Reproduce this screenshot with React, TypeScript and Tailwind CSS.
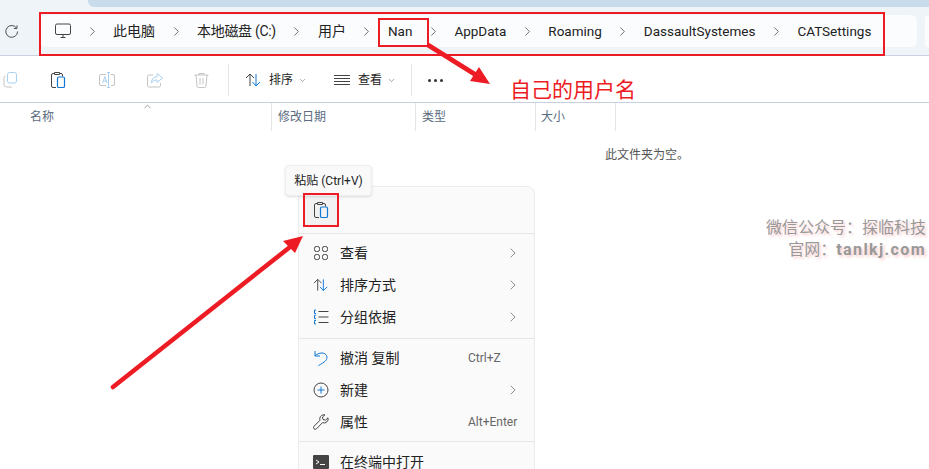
import { ChevronDown, ChevronRight, ChevronUp } from "lucide-react";
import { JSX } from "react";

const FONT = "font-['Roboto','Noto_Sans_CJK_SC',sans-serif]";

const crumbs = ["此电脑", "本地磁盘 (C:)", "用户", "Nan", "AppData", "Roaming", "DassaultSystemes", "CATSettings"];

const crumbClass = (c: string) => {
  if (c.startsWith("本地")) return "tracking-[-0.3px]";
  return /^[A-Z]/.test(c) ? "text-[13.5px]" : "";
};

const Crumb = () => (
  <span className="flex w-[42px] shrink-0 justify-center">
    <ChevronRight size={15} strokeWidth={1.1} className="text-[#333]" />
  </span>
);

const PasteIcon = ({ size = 20 }: { size?: number }) => (
  <svg width={size} height={size} viewBox="0 0 20 20" fill="none">
    <path d="M6 3.500H5a1.500 1.500 0 0 0-1.500 1.500v11A1.500 1.500 0 0 0 5 17.500h3" stroke="#444" />
    <path d="M12 3.500h1A1.500 1.500 0 0 1 14.500 5v1.500" stroke="#444" />
    <path d="M6.500 2.500h5v2h-5z" stroke="#444" />
    <rect x="9.500" y="7" width="7" height="10.500" rx="1.300" stroke="#0f78d4" strokeWidth="1.200" />
  </svg>
);

const SortIcon = () => (
  <svg width="17" height="14" viewBox="0 0 17 14" fill="none">
    <path d="M5 13V1M1 5l4-4 4 4" stroke="#444" />
    <path d="M11 1v12M7.500 9l3.500 4 4-4" stroke="#0f78d4" />
  </svg>
);

const menuTop: Array<[string, JSX.Element]> = [
  [
    "查看",
    <svg key="v" width="16" height="16" viewBox="0 0 16 16" fill="none" stroke="#444">
      <rect x="1.500" y="1.500" width="5" height="5" rx="1.800" />
      <rect x="9.500" y="1.500" width="5" height="5" rx="1.800" />
      <rect x="1.500" y="9.500" width="5" height="5" rx="1.800" />
      <rect x="9.500" y="9.500" width="5" height="5" rx="1.800" />
    </svg>,
  ],
  ["排序方式", <SortIcon key="s" />],
  [
    "分组依据",
    <svg key="g" width="16" height="16" viewBox="0 0 16 16" fill="none">
      <path d="M5.500 2.500h10M5.500 8h10M5.500 13.500h10" stroke="#444" />
      <path d="M3 1H1.500v3.500H3M3 6.200H1.500v3.500H3M3 11.500H1.500V15H3" stroke="#0f78d4" />
    </svg>,
  ],
];

const MenuRow = ({
  icon,
  label,
  hint,
  arrow,
}: {
  icon: JSX.Element;
  label: string;
  hint?: string;
  arrow?: boolean;
}) => (
  <div className="flex h-8 items-center pl-[14px] pr-[13px]">
    <span className="flex w-4 justify-center">{icon}</span>
    <span className="ml-[11px] flex-1 text-[14px] text-[#222]">{label}</span>
    {hint && <span className="mr-[2px] w-[51px] whitespace-nowrap text-[12px] text-[#666]">{hint}</span>}
    {arrow && <ChevronRight size={16} strokeWidth={1.1} className="text-[#666]" />}
  </div>
);

export default function App() {
  return (
    <div className={`relative h-[469px] w-[929px] overflow-hidden bg-white ${FONT}`}>
      {/* title bar + address bar */}
      <div className="h-[56px] border-b border-[#c9d3df] bg-[#eff4f9]">
        <div className="ml-[88px] h-[7px] rounded-bl-md bg-[#c9dcec]" />
        <div className="flex items-center pt-2">
          <svg className="ml-[4px]" width="15" height="15" viewBox="0 0 16 16" fill="none" stroke="#444">
            <path d="M13.500 4.500A6.300 6.300 0 1 0 14.500 8M13.800 1.500v3.300h-3.300" />
          </svg>
          <div className="ml-[21px] flex h-[32px] w-[877px] items-center rounded-md bg-[#fbfcfe] text-[14px] text-[#222]">
            <svg className="ml-[15px]" width="16" height="16" viewBox="0 0 16 16" fill="none" stroke="#444">
              <rect x="0.500" y="1" width="15" height="10.500" rx="1.500" />
              <path d="M5.500 14.500h5M8 11.500v3" />
            </svg>
            <Crumb />
            {crumbs.map((c, i) => (
              <div key={c} className="flex items-center">
                <span className={`whitespace-nowrap ${crumbClass(c)}`}>{c}</span>
                {i < crumbs.length - 1 && <Crumb />}
              </div>
            ))}
          </div>
          <div className="ml-2 h-[32px] flex-1 rounded-l-md bg-[#fbfcfe]" />
        </div>
      </div>

      {/* command bar */}
      <div className="flex h-[47px] items-center border-b border-[#c5d0dc] pt-[2px]">
        <div className="ml-[3px] flex items-center gap-[30px]">
          <svg width="15" height="16" viewBox="0 0 15 16" fill="none">
            <rect x="4.500" y="0.500" width="9" height="10.500" rx="2" stroke="#a9d0f0" />
            <path d="M2.500 4A1.500 1.500 0 0 0 1 5.500v7A2.500 2.500 0 0 0 3.500 15H9" stroke="#c4c4c4" />
          </svg>
          <PasteIcon />
          <svg width="18" height="16" viewBox="0 0 18 16" fill="none">
            <path d="M8 2.500H3A1.500 1.500 0 0 0 1.500 4v8A1.500 1.500 0 0 0 3 13.500h5M13 2.500h2A1.500 1.500 0 0 1 16.500 4v8a1.500 1.500 0 0 1-1.500 1.500h-2" stroke="#c4c4c4" />
            <path d="M10.500 0.500v15M9 0.500h3M9 15.500h3" stroke="#a9d0f0" />
            <path d="M4.500 11 7 4.500 9 11M5.300 9h3" stroke="#a9d0f0" />
          </svg>
          <svg width="18" height="17" viewBox="0 0 18 17" fill="none">
            <path d="M7 3H3a1.500 1.500 0 0 0-1.500 1.500v9A1.500 1.500 0 0 0 3 15h10a1.500 1.500 0 0 0 1.500-1.500V11" stroke="#c4c4c4" />
            <path d="M11 1.500 16.500 6 11 10.500V8c-3 0-4.500 1-5.500 3 0-4 2-6 5.500-6.200z" stroke="#a9d0f0" />
          </svg>
          <svg width="15" height="16" viewBox="0 0 15 16" fill="none" stroke="#c4c4c4">
            <path d="M0.500 3h14M5 3V1.500h5V3M2 3l1 11a1.500 1.500 0 0 0 1.500 1.500h6A1.500 1.500 0 0 0 12 14l1-11M6 6v6.500M9 6v6.500" />
          </svg>
        </div>
        <div className="ml-[19px] h-[32px] w-px bg-[#e3e6ea]" />
        <div className="ml-[16px] flex items-center text-[12px] text-[#222]">
          <SortIcon />
          <span className="ml-[7px]">排序</span>
          <ChevronDown size={9} className="ml-[5px] text-[#888]" />
        </div>
        <div className="ml-[27px] flex items-center text-[12px] text-[#222]">
          <svg width="16" height="10" viewBox="0 0 16 10" stroke="#444">
            <path d="M0 0.500h16M0 3.500h16M0 6.500h16M0 9.500h16" />
          </svg>
          <span className="ml-[8px]">查看</span>
          <ChevronDown size={9} className="ml-[5px] text-[#888]" />
        </div>
        <div className="ml-[15px] h-[32px] w-px bg-[#e3e6ea]" />
        <div className="ml-[16px] flex gap-[3px]">
          <span className="size-[3px] rounded-full bg-[#333]" />
          <span className="size-[3px] rounded-full bg-[#333]" />
          <span className="size-[3px] rounded-full bg-[#333]" />
        </div>
      </div>

      {/* column header */}
      <div className="relative flex h-[28px] items-center text-[12px] text-[#5b6b80]">
        <ChevronUp size={11} strokeWidth={1.2} className="absolute left-[142px] top-[-2px] text-[#555]" />
        <span className="ml-[30px] w-[241px]">名称</span>
        <span className="h-full w-[144px] border-l border-[#e5e5e5] pl-[6px] leading-[28px]">修改日期</span>
        <span className="h-full w-[120px] border-l border-[#e5e5e5] pl-[6px] leading-[28px]">类型</span>
        <span className="h-full w-[81px] border-r border-l border-[#e5e5e5] pl-[5px] leading-[28px]">大小</span>
      </div>

      <div className="mt-[15px] ml-[605px] text-[12px] leading-[18px] text-[#555]">此文件夹为空。</div>

      {/* context menu */}
      <div className="absolute top-[186px] left-[298px] w-[237px] rounded-lg border border-[#ececec] bg-[#fafafa]">
        <div className="flex h-[47px] items-center border-b border-[#e6e6e6] pl-[5px]">
          <div className="flex h-8 w-[34px] items-center justify-center rounded bg-[#f2f2f2]">
            <PasteIcon size={20} />
          </div>
        </div>
        <div className="border-b border-[#e6e6e6] pt-[3px] pb-[5px]">
          {menuTop.map(([label, icon]) => (
            <MenuRow key={label} label={label} icon={icon} arrow />
          ))}
        </div>
        <div className="border-b border-[#e6e6e6] pt-[3px] pb-[3px]">
          <MenuRow
            label="撤消 复制"
            hint="Ctrl+Z"
            icon={
              <svg width="16" height="16" viewBox="0 0 16 16" fill="none" stroke="#0f78d4">
                <path d="M2 1v5h5M2 6c2-2 4-3 7-3 3 0 5 2 5 4.500S12 12 5.500 15.500" />
              </svg>
            }
          />
          <MenuRow
            label="新建"
            arrow
            icon={
              <svg width="16" height="16" viewBox="0 0 16 16" fill="none">
                <circle cx="8" cy="8" r="7" stroke="#444" />
                <path d="M8 4.500v7M4.500 8h7" stroke="#0f78d4" />
              </svg>
            }
          />
          <MenuRow
            label="属性"
            hint="Alt+Enter"
            icon={
              <svg width="16" height="16" viewBox="0 0 16 16" fill="none" stroke="#444">
                <path d="M10.500 0.800a4 4 0 0 0-3.500 5.400L1 12.300a1.600 1.600 0 0 0 2.500 2.500l6-6.200a4 4 0 0 0 5.500-4.800L12.500 6.200 10 5.500 9.500 3l2.500-2.200a4 4 0 0 0-1.500 0z" />
              </svg>
            }
          />
        </div>
        <div className="pt-[4px]">
          <MenuRow
            label="在终端中打开"
            icon={
              <svg width="16" height="14" viewBox="0 0 16 14">
                <rect width="16" height="14" rx="1" fill="#444" />
                <path d="M3 5l3 2-3 2" fill="none" stroke="#fff" />
                <path d="M7 9.500h5" stroke="#fff" />
              </svg>
            }
          />
        </div>
      </div>

      {/* tooltip */}
      <div className="absolute top-[165px] left-[285px] flex h-[31px] w-[87px] items-center justify-center rounded border border-[#eeeeee] bg-[#f9f9f9] text-[12px] text-[#222] shadow-sm">
        粘贴 (Ctrl+V)
      </div>

      {/* annotations */}
      <div className="absolute top-[12px] left-[39px] h-[44px] w-[846px] border-[2px] border-[#ed1c24]" />
      <div className="absolute top-[18px] left-[378px] h-[29px] w-[51px] border-[2px] border-[#ed1c24]" />
      <div className="absolute top-[193px] left-[303px] h-[34px] w-[36px] border-[2px] border-[#ed1c24]" />
      <svg className="absolute top-0 left-0" width="929" height="469" fill="#ed1c24" stroke="none">
        <path d="M428 45 476 75" stroke="#ed1c24" strokeWidth="5" />
        <path d="M490 84 470 81 479 67z" />
        <path d="M113 387 290 247" stroke="#ed1c24" strokeWidth="4.500" strokeLinecap="round" />
        <path d="M303 236 283 241 295 253z" />
      </svg>
      <div className="absolute top-[75px] left-[510px] text-[21px] leading-[30px] text-[#ed1c24]">自己的用户名</div>
      <div className="absolute top-[217px] right-[3px] text-right text-[16px] leading-[22px] text-[#999] [text-shadow:2px_2px_3px_#f9c8c8]">
        <div>{"微信公众号\uFF1A探临科技"}</div>
        <div>
          {"官网\uFF1A"}<span className="font-bold tracking-[1.4px]">tanlkj.com</span>
        </div>
      </div>
    </div>
  );
}
